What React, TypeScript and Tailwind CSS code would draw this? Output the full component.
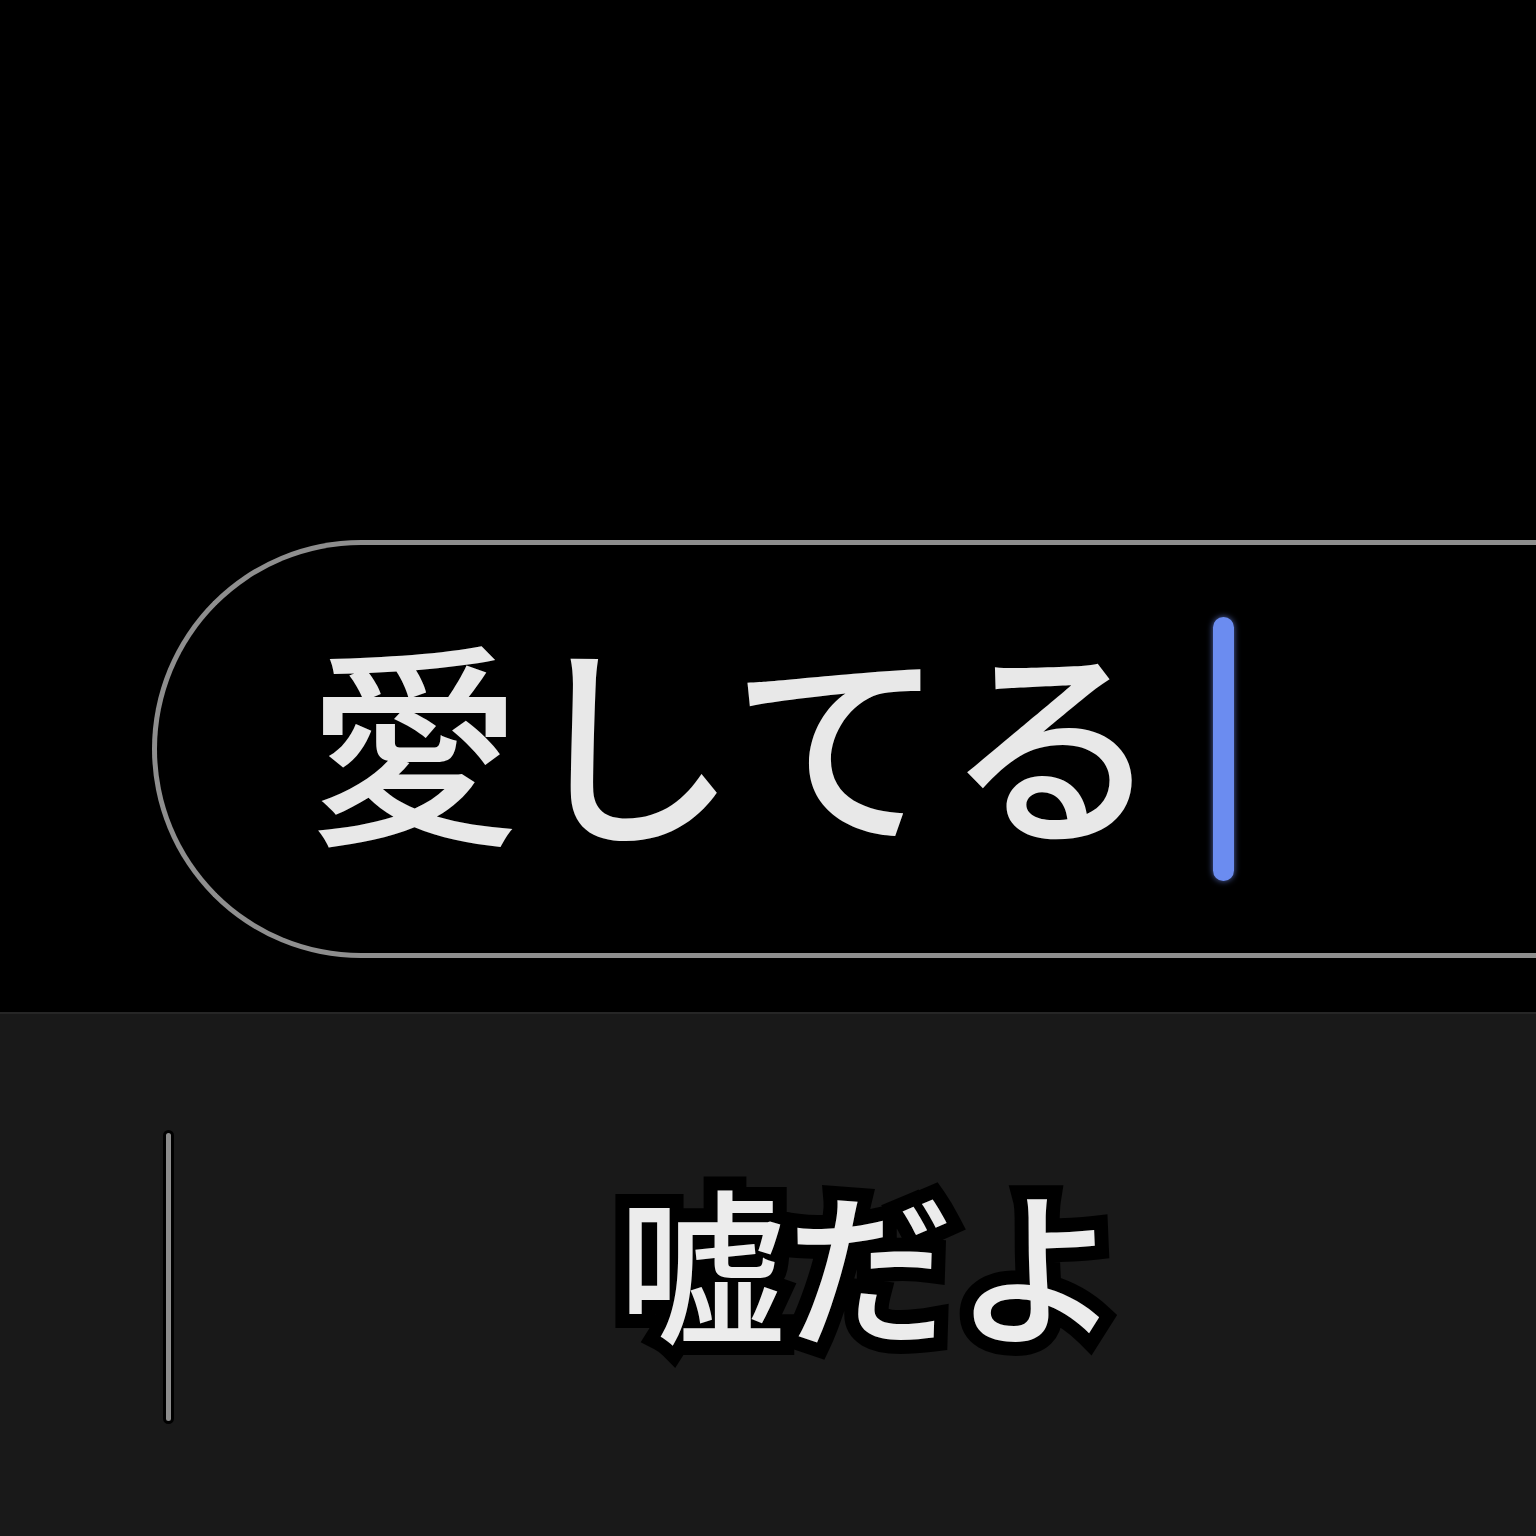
export default function App() {
  const jp = "font-['Noto_Sans_CJK_JP','Noto_Sans',sans-serif]";
  return (
    <div className={`w-[1536px] h-[1536px] overflow-hidden bg-black ${jp}`}>
      {/* top: input pill */}
      <div className="h-[1012px] bg-black pt-[540px] pl-[152px] flex flex-col">
        <div className="h-[418px] mr-[-40px] rounded-l-full border-[5px] border-r-0 border-[#8e8e8e] flex items-center pl-[150px]">
          <span className="mb-[30px] text-[215px] font-medium leading-none text-[#e8e8e8]">愛してる</span>
          <span className="ml-[52px] w-[21px] h-[264px] rounded-full bg-[#6b8cf0] shadow-[0_0_6px_rgba(120,150,255,0.7)]" />
        </div>
      </div>

      {/* bottom: subtitle area */}
      <div className="h-[524px] bg-[#191919] border-t-2 border-[#262626] flex">
        <div className="pl-[163px] pt-[116px]">
          <div className="w-[11px] h-[294px] rounded-full bg-[#8c8c8c] border-[3px] border-black" />
        </div>
        <div className="flex-1 flex pt-[162px] pl-[444px]">
          <span className="text-[168px] font-medium leading-none text-[#ececec] [paint-order:stroke_fill] [-webkit-text-stroke:28px_#000]">
            嘘だよ
          </span>
        </div>
      </div>
    </div>
  );
}
